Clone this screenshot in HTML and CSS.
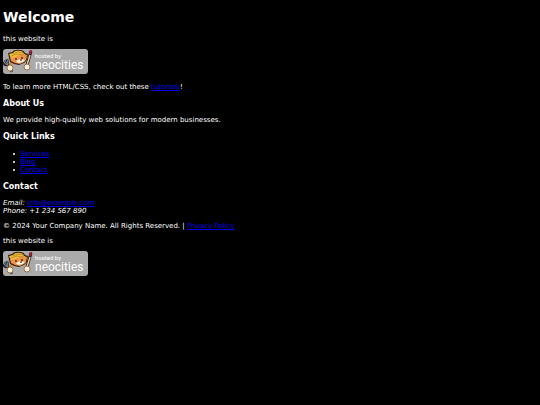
FILE: index.html
```
<!DOCTYPE html>
<html lang="en">
<head>
<meta charset="utf-8">
<title>Welcome</title>
<link rel="stylesheet" href="styles.css">
</head>
<body>
<svg class="defs" aria-hidden="true">
  <symbol id="cat" viewBox="0 0 32 25">
    <!-- fork -->
    <path d="M2 11L9 23M0 13Q2 18 5 15L4 10" fill="none" stroke="#22262b" stroke-width="2.400"/>
    <path d="M2 11L9 23M1 13Q3 17 5 15L4 10" fill="none" stroke="#8a96a1" stroke-width="0.800"/>
    <!-- brush -->
    <path d="M28 2L24 16" stroke="#2c1c16" stroke-width="3"/>
    <path d="M27 6L24 16" stroke="#f0d3a5" stroke-width="1.400"/>
    <path d="M27 1L29 1L28 5L26 5Z" fill="#a52335"/>
    <!-- cat -->
    <path d="M5 4L9 3Q11 0 17 1Q21 1 22 4L25 5L24 11L21 14L16 16L11 15L7 13L6 9Z" fill="#3a2110"/>
    <path d="M7 8L8 12L12 14L17 15L21 13L23 11L24 6L18 5Z" fill="#ee9348"/>
    <path d="M6 5L10 4Q12 1 17 2Q20 2 21 5L23 6L17 6L12 8L8 9Z" fill="#edbd3c"/>
    <path d="M10 5L15 3L20 4M8 7L14 5L21 6" fill="none" stroke="#b98522" stroke-width="0.800"/>
    <path d="M13 12L17 10L22 11L20 13L15 14Z" fill="#fff0db"/>
    <path d="M13 9V11M19 8V10M17 11H19" fill="none" stroke="#26150e" stroke-width="1.200"/>
    <!-- paws -->
    <path d="M8 14L8 16" stroke="#e98331" stroke-width="3"/>
    <circle cx="7" cy="19" r="3" fill="#fff3dd" stroke="#8a5b2d" stroke-width="0.800"/>
    <circle cx="24" cy="18" r="3" fill="#fff3dd" stroke="#8a5b2d" stroke-width="0.800"/>
  </symbol>
</svg>
<header>
  <h1>Welcome</h1>
</header>
<main>
  <p>this website is</p>
  <a class="badge" href="#neocities">
    <svg class="cat" aria-hidden="true"><use href="#cat"/></svg>
    <span class="badge-text"><small>hosted by</small><span>neocities</span></span>
  </a>
  <p>To learn more HTML/CSS, check out these <a href="#tutorials">tutorials</a>!</p>
</main>
<footer>
  <h3>About Us</h3>
  <p>We provide high-quality web solutions for modern businesses.</p>
  <h3>Quick Links</h3>
  <ul>
    <li><a href="#services">Services</a></li>
    <li><a href="#blog">Blog</a></li>
    <li><a href="#contact">Contact</a></li>
  </ul>
  <h3>Contact</h3>
  <address>Email: <a href="mailto:info@example.com">info@example.com</a><br>Phone: +1 234 567 890</address>
  <p>© 2024 Your Company Name. All Rights Reserved. | <a href="#privacy">Privacy Policy</a></p>
  <p>this website is</p>
  <a class="badge" href="#neocities">
    <svg class="cat" aria-hidden="true"><use href="#cat"/></svg>
    <span class="badge-text"><small>hosted by</small><span>neocities</span></span>
  </a>
</footer>
</body>
</html>
```
FILE: styles.css
```
body {
  margin: 0;
  padding: 9px 3px;
  background: #000;
  color: #fff;
  font: 7px/8px "DejaVu Sans", sans-serif;
}
a { color: #0000ee; }
h1 { margin: 0 0 10px; font-size: 14px; line-height: 16px; }
h3 { margin: 8px 0; font-size: 8px; line-height: 9px; }
p { margin: 7px 0; }
ul { margin: 9px 0 8px; padding-left: 10px; list-style: none; }
li { display: flex; align-items: center; gap: 5px; }
li::before { content: ""; width: 2px; height: 2px; border-radius: 1px; background: #fff; }
.defs { position: absolute; width: 0; height: 0; }
p:has(+ .badge) { margin-bottom: 6px; }
.badge {
  display: flex;
  width: 85px;
  height: 25px;
  margin: 6px 0 9px;
  border-radius: 3px;
  background: #aaa;
  color: #fff;
  text-decoration: none;
}
.cat { flex: none; width: 32px; height: 25px; }
.badge-text {
  display: flex;
  flex-direction: column;
  padding-top: 4px;
  font: 12px/12px Roboto, sans-serif;
}
.badge-text small { font-size: 6px; line-height: 6px; }
```
